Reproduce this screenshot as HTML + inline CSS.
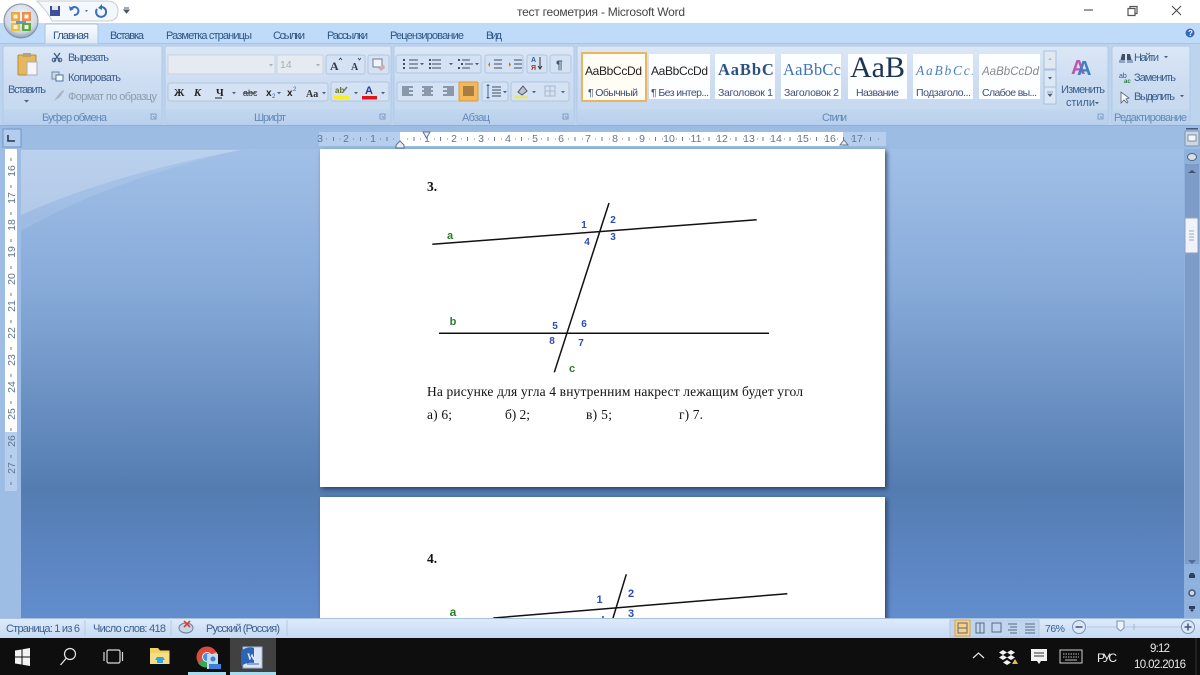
<!DOCTYPE html>
<html><head><meta charset="utf-8"><title>тест геометрия - Microsoft Word</title>
<style>
html,body{margin:0;padding:0;width:1200px;height:675px;overflow:hidden;background:#fff}
svg{display:block;position:absolute;left:0;top:0;filter:blur(.35px)}
svg svg{position:static;filter:none}
text{font-family:"Liberation Sans",sans-serif;font-size:10px;fill:#3d5a80}
.tab{font-size:11px;fill:#2f5585}
.r{fill:#3c5f8c;font-size:11px}
.g{fill:#6488b6;font-size:11px}
.s{font-size:10.5px;fill:#3d4f78}
.n{fill:#64748c;font-size:10.5px;text-anchor:middle}
.f{font-family:"Liberation Serif",serif;font-size:13.5px;fill:#111}
.bl{fill:#2b4bb8;font-size:10px;font-weight:bold;text-anchor:middle}
.gr{fill:#2c7a2c;font-size:11px;font-weight:bold;text-anchor:middle}
.b{fill:#d4e2f3;stroke:#b0c6e0;stroke-width:1}
.i{stroke:#3f4f66;stroke-width:1.4;fill:none}
</style></head><body>
<svg width="1200" height="675" viewBox="0 0 1200 675" xmlns="http://www.w3.org/2000/svg">
<defs>
<linearGradient id="doc" x1="0" y1="0" x2="0" y2="1"><stop offset="0" stop-color="#a6c4ea"/><stop offset=".32" stop-color="#88abd9"/><stop offset=".74" stop-color="#547cb1"/><stop offset=".85" stop-color="#5a84bf"/><stop offset="1" stop-color="#628dcd"/></linearGradient>
<linearGradient id="rib" x1="0" y1="0" x2="0" y2="1"><stop offset="0" stop-color="#dbe7f6"/><stop offset=".5" stop-color="#ccdcf1"/><stop offset="1" stop-color="#c4d8f0"/></linearGradient>
<linearGradient id="lab" x1="0" y1="0" x2="0" y2="1"><stop offset="0" stop-color="#c2d7ef"/><stop offset="1" stop-color="#b9d1ee"/></linearGradient>
<linearGradient id="tabg" x1="0" y1="0" x2="0" y2="1"><stop offset="0" stop-color="#fafcff"/><stop offset="1" stop-color="#dce8f7"/></linearGradient>
<linearGradient id="stat" x1="0" y1="0" x2="0" y2="1"><stop offset="0" stop-color="#dfebf9"/><stop offset="1" stop-color="#c5daf3"/></linearGradient>
<radialGradient id="orb" cx=".5" cy=".35" r=".65"><stop offset="0" stop-color="#f4f7fb"/><stop offset=".75" stop-color="#ccd6e3"/><stop offset="1" stop-color="#8a9bb0"/></radialGradient>
<filter id="sh" x="-5%" y="-5%" width="110%" height="110%"><feDropShadow dx="2" dy="2" stdDeviation="2.5" flood-color="#1d2f4c" flood-opacity=".75"/></filter>
</defs>

<!-- title bar -->
<rect width="1200" height="23" fill="#fff"/>
<path d="M37 1H108Q118 2 118 11Q118 21 108 21H52Q48 12 37 1Z" fill="#f4f7fb" stroke="#c9ced6"/>
<rect x="50" y="6" width="10" height="10" fill="#3b4f9c"/><rect x="52" y="6" width="6" height="4" fill="#dfe6f5"/>
<path d="M71 9a4 4 0 1 1 3 6" fill="none" stroke="#3a6dba" stroke-width="2"/><path d="M69 6l1 5 4-2z" fill="#3a6dba"/>
<path d="M85 10l3 0-1.500 2z" fill="#5c6f88"/>
<path d="M100 7a5 5 0 1 1-3 2" fill="none" stroke="#3a6dba" stroke-width="2"/><path d="M102 4v6l-4-2z" fill="#3a6dba"/>
<path d="M124 8h5M124 10l5 0-2.500 3z" stroke="#4a5668" fill="#4a5668" stroke-width="1"/>
<text x="517" y="16" style="font-size:12px;fill:#444" textLength="168">тест геометрия  -  Microsoft Word</text>
<path d="M1084 10h9" stroke="#666" stroke-width="1.300"/>
<path d="M1128 8.500h7v7h-7zM1130 8.500v-2h7v7h-2" fill="none" stroke="#555" stroke-width="1.200"/>
<path d="M1172 6l9 9M1181 6l-9 9" stroke="#444" stroke-width="1"/>

<!-- tabs -->
<rect y="23" width="1200" height="21" fill="#bfdbf9"/>
<rect y="43" width="1200" height="1" fill="#a3c3e8"/>
<path d="M45 44V26Q45 24 47 24H96Q98 24 98 26V44Z" fill="url(#tabg)" stroke="#a9c4e4"/>
<text class="tab" x="53" y="39" textLength="36">Главная</text>
<text class="tab" x="110" y="39" textLength="34">Вставка</text>
<text class="tab" x="166" y="39" textLength="86">Разметка страницы</text>
<text class="tab" x="273" y="39" textLength="32">Ссылки</text>
<text class="tab" x="327" y="39" textLength="41">Рассылки</text>
<text class="tab" x="390" y="39" textLength="74">Рецензирование</text>
<text class="tab" x="486" y="39" textLength="16">Вид</text>
<circle cx="1190" cy="33" r="5" fill="#2f69bd" stroke="#cfe0f5"/><text x="1188" y="36" style="font-size:8px;fill:#fff;font-weight:bold">?</text>

<!-- office orb -->
<circle cx="21" cy="21" r="17" fill="url(#orb)" stroke="#7d8fa6"/>
<path d="M11 12h9v9h-9z" fill="#f0a640"/><path d="M22 12h9v9h-9z" fill="#ee8f52"/><path d="M11 23h9v8h-9z" fill="#e8c03c"/><path d="M22 23h9v8h-9z" fill="#5aa848"/>
<path d="M13.500 14.500h4v4h-4zM24.500 14.500h4v4h-4zM13.500 25h4v4h-4zM24.500 25h4v4h-4z" fill="#f7f1df"/>
<path d="M16 21h10v3H16z" fill="#4a8fce" opacity=".85"/>

<!-- ribbon -->
<rect y="44" width="1200" height="81" fill="#bdd4ef"/>
<g stroke="#b0c9e6">
<rect x="3" y="46" width="159" height="78" rx="2" fill="url(#rib)"/>
<rect x="165" y="46" width="226" height="78" rx="2" fill="url(#rib)"/>
<rect x="394" y="46" width="180" height="78" rx="2" fill="url(#rib)"/>
<rect x="577" y="46" width="531" height="78" rx="2" fill="url(#rib)"/>
<rect x="1112" y="46" width="78" height="78" rx="2" fill="url(#rib)"/>
</g>
<g fill="url(#lab)">
<rect x="4" y="109" width="157" height="14"/><rect x="166" y="109" width="224" height="14"/><rect x="395" y="109" width="178" height="14"/><rect x="578" y="109" width="529" height="14"/><rect x="1113" y="109" width="76" height="14"/>
</g>
<text class="g" x="42" y="121" textLength="65">Буфер обмена</text>
<text class="g" x="254" y="121" textLength="32">Шрифт</text>
<text class="g" x="462" y="121" textLength="28">Абзац</text>
<text class="g" x="822" y="121" textLength="25">Стили</text>
<text class="g" x="1114" y="121" textLength="73">Редактирование</text>
<g fill="none" stroke="#6f8db3" stroke-width=".8">
<path d="M151 114h5v5h-5zM153 116l2 2"/><path d="M380 114h5v5h-5zM382 116l2 2"/><path d="M563 114h5v5h-5zM565 116l2 2"/><path d="M1098 114h5v5h-5zM1100 116l2 2"/>
</g>

<!-- clipboard group -->
<rect x="18" y="55" width="18" height="20" rx="1" fill="#e8b75c" stroke="#b88a3c"/>
<rect x="23" y="53" width="8" height="4" fill="#b9a278"/>
<path d="M27 62h10l0 13h-10z" fill="#f4f6fa" stroke="#a4afbe"/>
<text class="r" x="8" y="93" textLength="38">Вставить</text>
<path d="M24 100h5l-2.500 2.500z" fill="#4c5f78"/>
<path d="M54 53l6 8M60 53l-6 8" stroke="#3d5a80" stroke-width="1.300"/><circle cx="54" cy="60" r="1.800" fill="none" stroke="#3d5a80"/><circle cx="60" cy="60" r="1.800" fill="none" stroke="#3d5a80"/>
<text class="r" x="68" y="61" textLength="41">Вырезать</text>
<rect x="52" y="72" width="7" height="7" fill="#cdd9e8" stroke="#6d85a5"/><rect x="56" y="75" width="7" height="6" fill="#f4f8fd" stroke="#4a75ab"/>
<text class="r" x="68" y="81" textLength="53">Копировать</text>
<path d="M54 101l4-6 5-5 1 1-4 6z" fill="#a7b2c0"/>
<text x="68" y="100" style="font-size:11px;fill:#8d9db0" textLength="89">Формат по образцу</text>

<!-- font group -->
<rect x="168" y="55" width="107" height="19" fill="#e6ebf2" stroke="#c6d3e4"/>
<rect x="277" y="55" width="46" height="19" fill="#e6ebf2" stroke="#c6d3e4"/>
<path d="M269 64h4l-2 2.500z M316 64h4l-2 2.500z" fill="#a8b2c0"/>
<text x="280" y="68" style="font-size:10.5px;fill:#a3adba">14</text>
<rect class="b" x="326" y="55" width="39" height="19" rx="2"/><rect class="b" x="368" y="55" width="21" height="19" rx="2"/>
<text x="330" y="70" style="font:bold 12px 'Liberation Serif',serif;fill:#2e3c50">A</text><text x="351" y="70" style="font:bold 10px 'Liberation Serif',serif;fill:#2e3c50">A</text>
<path d="M339 60l1.500-2 1.500 2M358 58l1.500 2 1.500-2" stroke="#2e3c50" fill="none" stroke-width=".8"/>
<rect x="373" y="59" width="9" height="8" fill="#f2f4f8" stroke="#6e7f96"/><path d="M378 68l6-3 1 3-4 3z" fill="#d9a6b5"/>
<rect class="b" x="168" y="83" width="160" height="18" rx="2"/><rect class="b" x="331" y="82" width="58" height="19" rx="2"/>
<text x="174" y="96" style="font:bold 10.500px 'Liberation Serif',serif;fill:#222">Ж</text>
<text x="194" y="96" style="font:italic bold 10.500px 'Liberation Serif',serif;fill:#222">К</text>
<text x="216" y="96" style="font:bold 10.500px 'Liberation Serif',serif;fill:#222">Ч</text>
<path d="M215 98h7" stroke="#222"/><path d="M232 92h4l-2 2.200z M277 92h4l-2 2.200zM322 92h4l-2 2.200zM354 92h4l-2 2.200zM381 92h4l-2 2.200z" fill="#4c5f78"/>
<text x="243" y="96" style="font-size:9px;fill:#333">abc</text><path d="M243 93h13" stroke="#333"/>
<text x="266" y="96" style="font-size:10px;font-weight:bold;fill:#222">x</text><text x="272" y="98" style="font-size:6px;fill:#3a60a0">2</text>
<text x="287" y="96" style="font-size:10px;font-weight:bold;fill:#222">x</text><text x="293" y="91" style="font-size:6px;fill:#3a60a0">2</text>
<text x="306" y="97" style="font:bold 10px 'Liberation Serif',serif;fill:#333">Aa</text>
<rect x="334" y="96" width="15" height="3" fill="#f7ee21"/>
<text x="335" y="93" style="font-size:8px;fill:#5b6b20;font-weight:bold">ab</text><path d="M343 92l4-5" stroke="#6d7788" stroke-width="1.500"/>
<text x="365" y="94" style="font:bold 11px 'Liberation Sans',sans-serif;fill:#25408f">A</text><rect x="362" y="96" width="15" height="3.500" fill="#e1141b"/>

<!-- paragraph group -->
<rect class="b" x="396" y="55" width="85" height="18" rx="2"/><rect class="b" x="485" y="55" width="38" height="18" rx="2"/><rect class="b" x="527" y="55" width="20" height="18" rx="2"/><rect class="b" x="550" y="55" width="21" height="18" rx="2"/>
<g class="i" style="stroke-width:1">
<path d="M409 60h9M409 64h9M409 68h9M432 60h9M432 64h9M432 68h9M462 60h8M465 64h8M462 68h8M494 60h8M494 64h8M494 68h8M514 60h8M514 64h8M514 68h8"/>
</g>
<path d="M403 59h2v2h-2zM403 63h2v2h-2zM403 67h2v2h-2zM429 59h2v2h-2zM429 63h2v2h-2zM429 67h2v2h-2zM458 59h2v2h-2zM461 63h2v2h-2zM458 67h2v2h-2z" fill="#3f4f66"/>
<path d="M420 63h4l-2 2.200zM449 63h4l-2 2.200zM475 63h4l-2 2.200z" fill="#4c5f78"/>
<path d="M490 62v5l-2-2.500zM509 62v5l2-2.500z" fill="#c07a20"/>
<text x="531" y="62" style="font-size:7px;font-weight:bold;fill:#2d5a9a">A</text><text x="531" y="70" style="font-size:7px;font-weight:bold;fill:#b03030">Я</text>
<path d="M540 57v12m-2-3l2 3 2-3" stroke="#333" fill="none"/>
<text x="556" y="69" style="font-size:12px;font-weight:bold;fill:#45586f">¶</text>
<rect class="b" x="397" y="82" width="81" height="19" rx="2"/><rect class="b" x="482" y="82" width="26" height="19" rx="2"/><rect class="b" x="511" y="82" width="58" height="19" rx="2"/>
<rect x="459" y="82" width="19" height="19" rx="1" fill="#f4b75a" stroke="#d79a3e"/>
<g class="i" style="stroke-width:1">
<path d="M402 87h11M402 89h7M402 91h11M402 93h7M402 95h11"/>
<path d="M422 87h11M424 89h7M422 91h11M424 93h7M422 95h11"/>
<path d="M443 87h11M447 89h7M443 91h11M447 93h7M443 95h11"/>
<path d="M463 87h11M463 89h11M463 91h11M463 93h11M463 95h11" stroke="#5a4428"/>
<path d="M492 87h9M492 90h9M492 93h9M492 96h9"/>
<path d="M488 85v13" stroke="#3268ad"/>
</g>
<path d="M486 86l2-2 2 2zM486 97l2 2 2-2zM503 91h4l-2 2.200zM532 91h4l-2 2.200zM561 91h4l-2 2.200z" fill="#3268ad"/>
<path d="M518 92l5-6 4 5-5 4z" fill="#b9c4d2" stroke="#556"/><rect x="514" y="96" width="14" height="2.500" fill="#e3e680"/>
<rect x="545" y="86" width="10" height="10" fill="none" stroke="#a8b8cb"/><path d="M550 86v10M545 91h10" stroke="#a8b8cb"/>

<!-- styles -->
<g fill="#fdfeff">
<rect x="649" y="54" width="61" height="45"/><rect x="715" y="54" width="60" height="45"/><rect x="781" y="54" width="60" height="45"/><rect x="848" y="54" width="59" height="45"/><rect x="913" y="54" width="60" height="45"/><rect x="979" y="54" width="61" height="45"/>
</g>
<rect x="582" y="53" width="64" height="48" fill="#fffdf4" stroke="#ecb45e" stroke-width="2"/>
<text x="585" y="75" style="font-size:12px;fill:#222" textLength="57">AaBbCcDd</text>
<text x="651" y="75" style="font-size:12px;fill:#222" textLength="57">AaBbCcDd</text>
<svg x="715" y="54" width="60" height="45"><text x="3" y="21" style="font:bold 16.500px 'Liberation Serif',serif;fill:#2c5180" textLength="64">AaBbCc</text></svg>
<svg x="781" y="54" width="60" height="45"><text x="2" y="21" style="font:16.500px 'Liberation Serif',serif;fill:#3f74b4" textLength="58">AaBbCc</text></svg>
<svg x="848" y="50" width="59" height="50"><text x="2" y="27" style="font:30px 'Liberation Serif',serif;fill:#1b3557">AaB</text></svg>
<svg x="913" y="54" width="60" height="45"><text x="3" y="21" style="font:italic 13.500px 'Liberation Serif',serif;fill:#4f81bd" textLength="60">AaBbCcI</text></svg>
<svg x="979" y="54" width="61" height="45"><text x="3" y="21" style="font:italic 11.500px 'Liberation Sans',sans-serif;fill:#8a8a8a" textLength="57">AaBbCcDd</text></svg>
<text class="s" x="588" y="96" textLength="50">¶ Обычный</text>
<text class="s" x="651" y="96" textLength="58">¶ Без интер...</text>
<text class="s" x="718" y="96" textLength="55">Заголовок 1</text>
<text class="s" x="784" y="96" textLength="55">Заголовок 2</text>
<text class="s" x="856" y="96" textLength="43">Название</text>
<text class="s" x="916" y="96" textLength="55">Подзаголо...</text>
<text class="s" x="982" y="96" textLength="55">Слабое вы...</text>
<g stroke="#a9c1de" fill="#dbe7f5"><rect x="1044" y="51" width="12" height="18" fill="#e2e8f0"/><rect x="1044" y="70" width="12" height="17"/><rect x="1044" y="87" width="12" height="17"/></g>
<path d="M1048 60h4l-2-2.500z" fill="#b5bfcc"/><path d="M1048 77h4l-2 2.500z" fill="#4c5f78"/><path d="M1047 92h6M1048 94h4l-2 2.500z" fill="#4c5f78" stroke="#4c5f78" stroke-width=".6"/>
<text x="1071" y="74" style="font:bold 20px 'Liberation Sans',sans-serif;fill:#c055b0">A</text><text x="1077" y="75" style="font:bold 20px 'Liberation Sans',sans-serif;fill:#3f7fc4">A</text>
<text class="r" x="1061" y="93" textLength="44">Изменить</text>
<text class="r" x="1066" y="106" textLength="29">стили</text><path d="M1095 102h4l-2 2.200z" fill="#4c5f78"/>

<!-- edit group -->
<path d="M1120 62l2-8h3v8zM1127 62v-8h3l2 8z" fill="#3f5068"/><rect x="1119" y="60" width="6" height="3" fill="#8ea4c2"/><rect x="1127" y="60" width="6" height="3" fill="#8ea4c2"/>
<text class="r" x="1134" y="61" textLength="25">Найти</text><path d="M1164 56h4l-2 2.200z" fill="#4c5f78"/>
<text x="1119" y="78" style="font-size:7px;fill:#35588a">ab</text><text x="1124" y="83" style="font-size:6px;fill:#2d7b3a;font-weight:bold">ac</text>
<text class="r" x="1134" y="81" textLength="42">Заменить</text>
<path d="M1121 92v11l3-3 3 3 1-1-2-3 3-1z" fill="#f8f8f8" stroke="#55606f" stroke-width=".8"/>
<text class="r" x="1134" y="100" textLength="41">Выделить</text><path d="M1180 95h4l-2 2.200z" fill="#4c5f78"/>

<!-- doc area -->
<rect y="125" width="1200" height="493" fill="url(#doc)"/>
<path d="M21 215Q110 175 240 150H21Z" fill="#fff" opacity=".2"/>
<path d="M21 231Q110 180 240 150H21Z" fill="#fff" opacity=".1"/>
<rect y="125" width="21" height="493" fill="#9dbde5"/>
<rect x="0" y="125" width="1200" height="24" fill="#9dbce3"/>
<rect x="0" y="125" width="1200" height="1" fill="#8fb0d8"/>
<rect x="3" y="129" width="18" height="18" fill="#b3cdee" stroke="#6f94c6"/>
<path d="M8 135v6h7" fill="none" stroke="#28384f" stroke-width="1.600"/>

<!-- horizontal ruler -->
<rect x="319" y="132" width="81" height="14" fill="#b7cfee"/>
<rect x="400" y="132" width="443" height="14" fill="#fff"/>
<rect x="843" y="132" width="43" height="14" fill="#b7cfee"/>
<text class="n" x="320" y="142">3</text><text class="n" x="346" y="142">2</text><text class="n" x="373" y="142">1</text>
<text class="n" x="427" y="142">1</text><text class="n" x="454" y="142">2</text><text class="n" x="481" y="142">3</text><text class="n" x="508" y="142">4</text><text class="n" x="535" y="142">5</text><text class="n" x="561" y="142">6</text><text class="n" x="588" y="142">7</text><text class="n" x="615" y="142">8</text><text class="n" x="642" y="142">9</text><text class="n" x="669" y="142">10</text><text class="n" x="696" y="142">11</text><text class="n" x="722" y="142">12</text><text class="n" x="749" y="142">13</text><text class="n" x="776" y="142">14</text><text class="n" x="803" y="142">15</text><text class="n" x="830" y="142">16</text><text class="n" x="857" y="142">17</text>
<path d="M333.500 137v4M360.500 137v4M387 137v4M414 137v4M440.500 137v4M467.500 137v4M494.500 137v4M521.500 137v4M548 137v4M575 137v4M602 137v4M629 137v4M655.500 137v4M682.500 137v4M709 137v4M736 137v4M763 137v4M790 137v4M816.500 137v4M843.500 137v4M870.500 137v4" stroke="#6c7b91"/>
<path d="M326 139h1M339.500 139h1M353 139h1M366 139h1M380 139h1M393 139h1M407 139h1M420 139h1M434 139h1M447 139h1M461 139h1M474 139h1M488 139h1M501 139h1M515 139h1M528 139h1M541 139h1M555 139h1M568 139h1M582 139h1M595 139h1M609 139h1M622 139h1M636 139h1M649 139h1M662 139h1M676 139h1M689 139h1M703 139h1M716 139h1M730 139h1M743 139h1M757 139h1M770 139h1M784 139h1M797 139h1M810 139h1M824 139h1M837 139h1M851 139h1M864 139h1M878 139h1" stroke="#7a889c"/>
<path d="M423 132h7l-3.500 6z" fill="#e6eef8" stroke="#64748c"/>
<path d="M400 141l-4 4v3h8v-3z" fill="#e6eef8" stroke="#64748c"/>
<path d="M844 140l-4 5h8z" fill="#e6eef8" stroke="#64748c"/>

<!-- vertical ruler -->
<rect x="5" y="149" width="12" height="283" fill="#fff"/>
<rect x="5" y="432" width="12" height="59" fill="#b7cfee"/>
<text class="n" transform="translate(15,171) rotate(-90)">16</text>
<text class="n" transform="translate(15,198) rotate(-90)">17</text>
<text class="n" transform="translate(15,225) rotate(-90)">18</text>
<text class="n" transform="translate(15,252) rotate(-90)">19</text>
<text class="n" transform="translate(15,279) rotate(-90)">20</text>
<text class="n" transform="translate(15,306) rotate(-90)">21</text>
<text class="n" transform="translate(15,333) rotate(-90)">22</text>
<text class="n" transform="translate(15,360) rotate(-90)">23</text>
<text class="n" transform="translate(15,387) rotate(-90)">24</text>
<text class="n" transform="translate(15,414) rotate(-90)">25</text>
<text class="n" transform="translate(15,441) rotate(-90)">26</text>
<text class="n" transform="translate(15,468) rotate(-90)">27</text>
<path d="M11 158v3M11 185v3M11 212v3M11 239v3M11 266v3M11 293v3M11 320v3M11 347v3M11 374v3M11 401v3M11 428v3M11 455v3M11 482v3" stroke="#6c7b91"/>

<!-- pages -->
<rect x="320" y="149" width="565" height="338" fill="#fff" filter="url(#sh)"/>
<rect x="320" y="497" width="565" height="125" fill="#fff" filter="url(#sh)"/>
<text class="f" x="427" y="191" style="font-weight:bold">3.</text>
<path d="M432.300 244.300L756.700 219.700M609 203L554.300 372.300M439 333.300H769" stroke="#111" stroke-width="1.500" fill="none"/>
<text class="gr" x="450" y="239">a</text><text class="gr" x="453" y="325">b</text><text class="gr" x="572" y="372">c</text>
<text class="bl" x="584" y="228">1</text><text class="bl" x="613" y="223">2</text><text class="bl" x="613" y="240">3</text><text class="bl" x="587" y="245">4</text><text class="bl" x="555" y="329">5</text><text class="bl" x="584" y="327">6</text><text class="bl" x="581" y="346">7</text><text class="bl" x="552" y="344">8</text>
<text class="f" x="427" y="396" textLength="376">На рисунке для угла 4 внутренним накрест лежащим будет угол</text>
<text class="f" x="427" y="419" textLength="25">а) 6;</text><text class="f" x="505" y="419" textLength="25">б) 2;</text><text class="f" x="586" y="419" textLength="26">в) 5;</text><text class="f" x="679" y="419" textLength="24">г) 7.</text>
<text class="f" x="427" y="563" style="font-weight:bold">4.</text>
<path d="M493.300 618L787.300 593.700M626.300 574.300L613 618" stroke="#111" stroke-width="1.500" fill="none"/>
<text class="gr" x="453" y="616" style="font-size:12px">a</text>
<text class="bl" x="599.500" y="603" style="font-size:11px">1</text><text class="bl" x="631" y="597" style="font-size:11px">2</text><text class="bl" x="631" y="617" style="font-size:11px">3</text>
<circle cx="603" cy="617" r="1" fill="#2b4bb8"/>

<!-- scrollbar -->
<rect x="1184" y="149" width="16" height="469" fill="#8fb1dd"/>
<rect x="1185" y="164" width="14" height="400" fill="#7d9dc8"/>
<rect x="1185" y="218" width="13" height="35" rx="1" fill="#f0f4fa" stroke="#8fa4c0"/>
<path d="M1189 231h5M1189 234h5M1189 237h5M1189 240h5" stroke="#9cabbd"/>
<path d="M1188 173h8l-4-3z" fill="#3f5272"/><path d="M1188 560h8l-4 4z" fill="#4e6c9a"/>
<rect x="1185" y="131" width="14" height="15" rx="1" fill="#c9d6e6" stroke="#7f93ab"/>
<rect x="1188" y="135" width="8" height="6" fill="#f5f5f5" stroke="#5f6d80" stroke-width=".7"/>
<rect x="1186" y="128" width="12" height="1.500" fill="#41597c"/>
<ellipse cx="1192" cy="157" rx="4.500" ry="3.500" fill="#d8dee8" stroke="#54657c"/>
<path d="M1189 578h6v-3l-1.500-2h-3l-1.500 2zM1192 572v3" fill="#2e3f5a"/><circle cx="1192" cy="593" r="3" fill="#cfd8e4" stroke="#45566e" stroke-width="1.500"/>
<path d="M1189 606h6v3h-6zM1192 609v3l-2-2zM1192 609v3l2-2z" fill="#2e3f5a"/>

<!-- status bar -->
<rect y="618" width="1200" height="20" fill="url(#stat)"/>
<rect y="618" width="1200" height="1" fill="#a7c1e0"/>
<text class="r" x="6" y="632" textLength="74">Страница: 1 из 6</text>
<text class="r" x="93" y="632" textLength="73">Число слов: 418</text>
<path d="M85 620v16M171 620v16M287 620v16" stroke="#b3cae6"/>
<ellipse cx="186" cy="628" rx="7" ry="5" fill="#c7d4e6" stroke="#6a7f9c"/><path d="M184 621l6 6M190 621l-6 6" stroke="#d0453a" stroke-width="1.600"/>
<text class="r" x="206" y="632" textLength="74">Русский (Россия)</text>
<rect x="950" y="620" width="89" height="17" fill="#c0d5ee" stroke="#b0c7e3"/>
<rect x="955" y="620" width="15" height="16" fill="#f8d186" stroke="#d8a04a"/>
<g fill="none" stroke="#5a6c80"><rect x="958" y="623" width="9" height="10"/><path d="M958 628h9"/><path d="M976 623h4v10h-4zM980 623h4v10h-4z"/><rect x="992" y="623" width="9" height="9"/><path d="M1008 624h9M1010 627h7M1008 630h9M1010 633h7M1025 624h10M1025 627h10M1025 630h10M1025 633h10"/></g>
<text x="1045" y="632" style="font-size:10.500px;fill:#2f5a96" textLength="20">76%</text>
<circle cx="1079" cy="627" r="6.500" fill="#dce8f6" stroke="#7792b5"/><path d="M1075.500 627h7" stroke="#3e5578" stroke-width="1.500"/>
<path d="M1087 627h95" stroke="#b5c8df"/>
<path d="M1117 621h7v7l-3.500 3-3.500-3z" fill="#eef3fa" stroke="#7792b5"/><path d="M1134 624v6" stroke="#9fb4cf"/>
<circle cx="1188" cy="627" r="6.500" fill="#dce8f6" stroke="#7792b5"/><path d="M1184.500 627h7M1188 623.500v7" stroke="#3e5578" stroke-width="1.500"/>

<!-- taskbar -->
<rect y="638" width="1200" height="37" fill="#0e0e0e"/>
<rect x="230" y="638" width="46" height="37" fill="#414141"/>
<rect x="188" y="672" width="38" height="3" fill="#a7dcec"/><rect x="230" y="672" width="46" height="3" fill="#a7dcec"/>
<path d="M15 650.500l6.500-1v7h-6.500zM22.500 649.200l7.500-1.200v8.500h-7.500zM15 657.500h6.500v7l-6.500-1zM22.500 657.500h7.500v8.500l-7.500-1.200z" fill="#f2f2f2"/>
<circle cx="70" cy="654" r="5.500" fill="none" stroke="#e6e6e6" stroke-width="1.200"/><path d="M66 658.500l-5.500 6.500" stroke="#e6e6e6" stroke-width="1.300"/>
<rect x="107" y="650" width="13" height="13" rx="1.500" fill="none" stroke="#d8d8d8" stroke-width="1.200"/><path d="M104 652v9M122.500 652v9" stroke="#d8d8d8" stroke-width="1.200"/>
<path d="M150 648h8l2 2.500h9.500v6h-19.500z" fill="#f2d264"/><path d="M150 653h19.500v11h-19.500z" fill="#f5dd88"/><path d="M157 657h6l2 3h-2v3h-6v-3h-2z" fill="#35a4dc"/>
<circle cx="207" cy="657" r="10.500" fill="#dd4a3b"/><path d="M207 657L198 663A10.500 10.500 0 0 0 207 667.500Z" fill="#3aa757"/><path d="M207 657L216.500 652A10.500 10.500 0 0 1 212 667Z" fill="#f1c232"/><circle cx="207" cy="657" r="4.500" fill="#4a8bf5" stroke="#eee"/>
<rect x="207" y="654" width="11" height="15" fill="#c3d9f0"/><rect x="209" y="664" width="12" height="5" fill="#3b7fd6"/><circle cx="213" cy="659" r="2.500" fill="#3b7fd6"/>
<rect x="243" y="647" width="19" height="21" fill="#dbe6f5" stroke="#9fb4d0"/><path d="M241 651q6-5 13-3v15q-7-1-13 3z" fill="#2c65b6"/><text x="247" y="660" style="font:bold 9px 'Liberation Serif',serif;fill:#eef">W</text>
<path d="M247 664h12" stroke="#3d6cad"/>
<path d="M973 658l5.500-5 5.500 5" fill="none" stroke="#e8e8e8" stroke-width="1.200"/>
<path d="M1003 650l4 2.500-4 2.500-4-2.500zM1011 650l4 2.500-4 2.500-4-2.500zM1003 655l4 2.500-4 2.500-4-2.500zM1011 655l4 2.500-4 2.500-4-2.500zM1007 660l4 2.500-4 2.500-4-2.500z" fill="#f2f2f2"/>
<path d="M1012 664l3-5 3 5z" fill="#e6bc3f"/>
<path d="M1031 649h16v12h-6l-2 3-2-3h-6z" fill="#f2f2f2"/><path d="M1034 653h10M1034 656h10" stroke="#333"/>
<rect x="1060" y="650" width="22" height="13" fill="none" stroke="#cfcfcf"/><path d="M1063 654h16M1063 657h16" stroke="#bbb" stroke-dasharray="1.500 1"/><path d="M1065 660h12" stroke="#bbb"/>
<text x="1097" y="662" style="font-size:12px;fill:#eee" textLength="20">РУС</text>
<text x="1150" y="652" style="font-size:11.500px;fill:#e8e8e8" textLength="20">9:12</text>
<text x="1134" y="668" style="font-size:11.500px;fill:#e8e8e8" textLength="52">10.02.2016</text>
<path d="M1196 638v37" stroke="#333"/>
</svg>
</body></html>
